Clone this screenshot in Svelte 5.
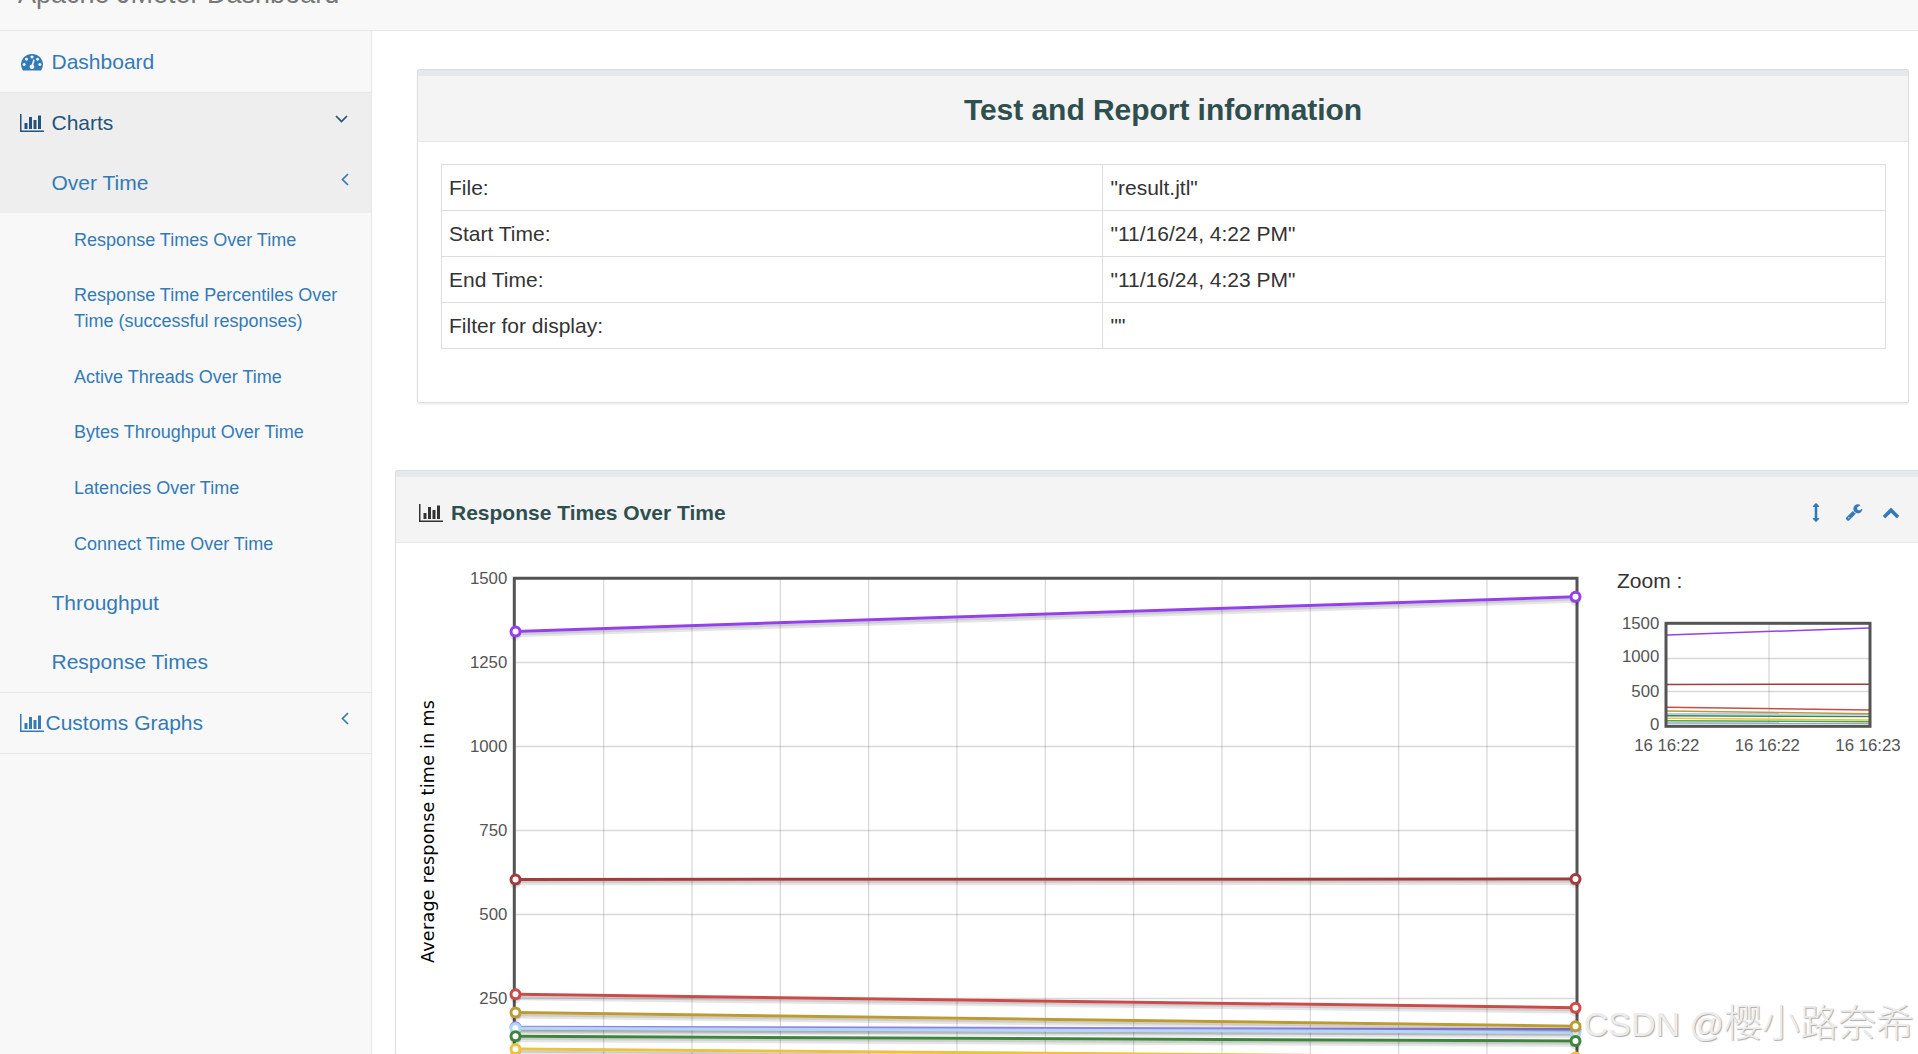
<script lang="ts">
	// Report dashboard: side navigation, test summary and the
	// "Response Times Over Time" panel with its overview plot.

	interface Series {
		color: string;
		from: number;
		to: number;
	}

	const overTime = [
		'Response Times Over Time',
		'Response Time Percentiles Over Time (successful responses)',
		'Active Threads Over Time',
		'Bytes Throughput Over Time',
		'Latencies Over Time',
		'Connect Time Over Time'
	];

	const info = [
		['File:', '"result.jtl"'],
		['Start Time:', '"11/16/24, 4:22 PM"'],
		['End Time:', '"11/16/24, 4:23 PM"'],
		['Filter for display:', '""']
	];

	const series: Series[] = [
		{ color: '#9440ed', from: 1344, to: 1447 },
		{ color: '#a23c3c', from: 606, to: 607 },
		{ color: '#cb4b4b', from: 264, to: 224 },
		{ color: '#9480e0', from: 166, to: 159 },
		{ color: '#afd8f8', from: 163, to: 151 },
		{ color: '#bd9b33', from: 210, to: 169 },
		{ color: '#3d853d', from: 139, to: 125 },
		{ color: '#edc240', from: 101, to: 76 },
		{ color: '#4da74d', from: 65, to: 50 },
		{ color: '#8cacc6', from: 28, to: 26 }
	];

	// main plot, coordinates local to the svg
	const X0 = 119.5;
	const X1 = 1179.5;
	const TOP = 35.5;
	const UNIT = 84 / 250;
	const yOf = (v: number) => TOP + (1500 - v) * UNIT;
	const ticks = [1500, 1250, 1000, 750, 500, 250];
	const columns = Array.from({ length: 11 }, (_, i) => X0 - 0.2 + ((X1 - X0) / 12) * (i + 1));

	// overview plot
	const MX0 = 67;
	const MX1 = 269;
	const miniY = (v: number) => 81.5 + (1500 - v) * (100.5 / 1500);
</script>

{#snippet chartIcon()}
	<svg class="chart-icon" viewBox="0 128 2048 1536" aria-hidden="true">
		<path d="M640 896v512h-256v-512h256zm384-512v1024h-256v-1024h256zm1024 1152v128h-2048v-1536h128v1408h1920zm-640-896v768h-256v-768h256zm384-384v1152h-256v-1152h256z" />
	</svg>
{/snippet}

{#snippet angleLeft()}
	<svg class="angle" width="8" height="13" viewBox="0 0 8 13" aria-hidden="true">
		<path d="M7 1 1.5 6.5 7 12" />
	</svg>
{/snippet}

<div class="page">
	<header class="navbar"><span class="brand">Apache JMeter Dashboard</span></header>

	<div class="main">
		<nav class="sidebar">
			<a href="#dashboard" class="item first">
				<span class="fw">
					<svg width="22" height="21" viewBox="0 0 1792 1792" preserveAspectRatio="none" aria-hidden="true">
						<path d="M384 1152q0-53-37.5-90.5t-90.5-37.5-90.5 37.5-37.5 90.5 37.5 90.5 90.5 37.5 90.5-37.5 37.5-90.5zm192-448q0-53-37.5-90.5t-90.5-37.5-90.5 37.5-37.5 90.5 37.5 90.5 90.5 37.5 90.5-37.5 37.5-90.5zm428 481l101-382q6-26-7.5-48.5t-38.5-29.5-48 6.5-30 39.5l-101 382q-60 5-107 43.5t-63 98.5q-20 77 20 146t117 89 146-20 89-117q16-60-6-117t-72-91zm660-33q0-53-37.5-90.5t-90.5-37.5-90.5 37.5-37.5 90.5 37.5 90.5 90.5 37.5 90.5-37.5 37.5-90.5zm-640-640q0-53-37.5-90.5t-90.5-37.5-90.5 37.5-37.5 90.5 37.5 90.5 90.5 37.5 90.5-37.5 37.5-90.5zm448 192q0-53-37.5-90.5t-90.5-37.5-90.5 37.5-37.5 90.5 37.5 90.5 90.5 37.5 90.5-37.5 37.5-90.5zm320 448q0 261-141 483-19 29-54 29h-1402q-35 0-54-29-141-221-141-483 0-182 71-348t191-286 286-191 348-71 348 71 286 191 191 286 71 348z" />
					</svg>
				</span>
				<span class="label gap">Dashboard</span>
			</a>
			<a href="#charts" class="item active">
				<span class="fw">{@render chartIcon()}</span>
				<span class="label gap">Charts</span>
				<svg class="angle down" width="13" height="8" viewBox="0 0 13 8" aria-hidden="true">
					<path d="M1 1 6.5 6.5 12 1" />
				</svg>
			</a>
			<a href="#over-time" class="item second open">
				<span class="label">Over Time</span>
				{@render angleLeft()}
			</a>
			<div class="third">
				{#each overTime as name}
					<a href="#chart">{name}</a>
				{/each}
			</div>
			<a href="#throughput" class="item second"><span class="label">Throughput</span></a>
			<a href="#response-times" class="item second last"><span class="label">Response Times</span></a>
			<a href="#customs" class="item customs">
				<span class="fw">{@render chartIcon()}</span>
				<span class="label">Customs Graphs</span>
				{@render angleLeft()}
			</a>
		</nav>

		<main class="content">
			<section class="panel summary">
				<div class="heading"><h2>Test and Report information</h2></div>
				<table>
					<tbody>
						{#each info as [key, value]}
							<tr><td class="key">{key}</td><td>{value}</td></tr>
						{/each}
					</tbody>
				</table>
			</section>

			<section class="panel graph">
				<div class="heading">
					<span class="heading-icon">{@render chartIcon()}</span>
					<h3>Response Times Over Time</h3>
					<div class="tools">
						<svg width="18" height="19" viewBox="0 0 1792 1792" preserveAspectRatio="none" aria-hidden="true">
							<path d="M1216 320q0 26-19 45t-45 19h-128v1024h128q26 0 45 19t19 45-19 45l-256 256q-19 19-45 19t-45-19l-256-256q-19-19-19-45t19-45 45-19h128v-1024h-128q-26 0-45-19t-19-45 19-45l256-256q19-19 45-19t45 19l256 256q19 19 19 45z" />
						</svg>
						<svg width="18" height="18" viewBox="0 0 1792 1792" aria-hidden="true">
							<path d="M448 1472q0-26-19-45t-45-19-45 19-19 45 19 45 45 19 45-19 19-45zm644-420l-682 682q-37 37-90 37-52 0-91-37l-106-108q-38-36-38-90 0-53 38-91l681-681q39 98 114.5 173.5t173.5 114.5zm634-435q0 39-23 106-47 134-164.5 217.5t-258.5 83.5q-185 0-316.5-131.5t-131.5-316.5 131.5-316.5 316.5-131.5q58 0 121.5 16.5t107.5 46.5q16 11 16 28t-16 28l-293 169v224l193 107q5-3 79-48.5t135.5-81 70.5-35.5q15 0 23.5 10t8.5 25z" />
						</svg>
						<svg width="18" height="18" viewBox="0 0 1792 1792" aria-hidden="true">
							<path d="M1683 1331l-166 165q-19 19-45 19t-45-19l-531-531-531 531q-19 19-45 19t-45-19l-166-165q-19-19-19-45.5t19-45.5l742-741q19-19 45-19t45 19l742 741q19 19 19 45.5t-19 45.5z" />
						</svg>
					</div>
				</div>

				<div class="plots">
					<svg class="plot" width="1204" height="511" viewBox="0 0 1204 511">
						<g class="grid">
							{#each columns as x}
								<line x1={x} x2={x} y1={TOP} y2="511" />
							{/each}
							{#each ticks.slice(1) as t}
								<line x1={X0} x2={X1} y1={yOf(t)} y2={yOf(t)} />
							{/each}
						</g>
						<path class="frame" d="M118.3 520V35.2H1181V520" />
						{#each series as s}
							<g transform="translate(0 .5)">
								<line class="shade wide" x1={X0} x2={X1} y1={yOf(s.from) + 3.7} y2={yOf(s.to) + 3.7} />
								<line class="shade" x1={X0} x2={X1} y1={yOf(s.from) + 2.6} y2={yOf(s.to) + 2.6} />
								<line x1={X0} x2={X1} y1={yOf(s.from)} y2={yOf(s.to)} stroke={s.color} stroke-width="3" />
								{#each [[X0, s.from], [X1, s.to]] as [x, v]}
									<path class="shade" d="M{x - 4.5} {yOf(v) + 3.4}a4.5 4.5 0 0 0 9 0" />
									<path class="shade dark" d="M{x - 4.5} {yOf(v) + 1.1}a4.5 4.5 0 0 0 9 0" />
									<circle cx={x} cy={yOf(v)} r="4.5" fill="#fff" stroke={s.color} stroke-width="3" />
								{/each}
							</g>
						{/each}
						{#each ticks as t}
							<text class="tick" x="111.3" y={yOf(t) + 5.5} text-anchor="end">{t}</text>
						{/each}
						<text class="axis" transform="translate(38 420) rotate(-90)" textLength="263">Average response time in ms</text>
					</svg>

					<div class="overview">
						<p>Zoom :</p>
						<svg class="mini" width="318" height="160" viewBox="0 50 318 160">
							<g class="grid">
								<line x1="169" x2="169" y1="80" y2="180" />
								<line x1={MX0} x2={MX1} y1="115.5" y2="115.5" />
								<line x1={MX0} x2={MX1} y1="148.5" y2="148.5" />
							</g>
							{#each series as s}
								<line x1={MX0} x2={MX1} y1={miniY(s.from)} y2={miniY(s.to)} stroke={s.color} stroke-width="1.5" />
							{/each}
							<rect class="frame" x="66" y="80.3" width="204" height="103" />
							<g class="tick" text-anchor="end">
								<text x="59.3" y="86.3">1500</text>
								<text x="59.3" y="119.3">1000</text>
								<text x="59.3" y="154.3">500</text>
								<text x="59.3" y="187.3">0</text>
							</g>
							<g class="tick" text-anchor="middle">
								<text x="66.8" y="208">16 16:22</text>
								<text x="167.3" y="208">16 16:22</text>
								<text x="268" y="208">16 16:23</text>
							</g>
						</svg>
					</div>
				</div>
			</section>
		</main>
	</div>

	<div class="watermark"><span>CSDN @</span>樱小路奈希</div>
</div>

<style>
	:global(body) {
		margin: 0;
		background: #fff;
	}

	.page {
		position: relative;
		display: flex;
		flex-direction: column;
		height: 1054px;
		overflow: hidden;
		color: #333;
		font: 21px/30px 'Liberation Sans', Arial, sans-serif;
	}

	.navbar {
		display: flex;
		flex: none;
		align-items: flex-end;
		box-sizing: border-box;
		height: 31px;
		padding: 0 18px;
		background: #f8f8f8;
		border-bottom: 1px solid #e7e7e7;
	}

	.brand {
		padding-bottom: 21px;
		color: #777;
		font-size: 27px;
		line-height: 30px;
	}

	.main {
		display: flex;
		flex: 1;
		min-height: 0;
	}

	.sidebar {
		flex: none;
		width: 371px;
		background: #f8f8f8;
		border-right: 1px solid #e7e7e7;
	}

	a {
		color: #337ab7;
		text-decoration: none;
	}

	.item {
		display: flex;
		align-items: center;
		box-sizing: border-box;
		height: 60px;
		padding: 0 22px 0 18.5px;
	}

	.item.first {
		height: 62px;
		border-bottom: 1px solid #e7e7e7;
	}

	.item.active {
		color: #23527c;
		background: #eee;
	}

	.item.second {
		padding-left: 51.5px;
	}

	.item.open {
		background: #eee;
	}

	.item.last {
		border-bottom: 1px solid #e7e7e7;
	}

	.item.customs {
		height: 61px;
		border-bottom: 1px solid #e7e7e7;
	}

	.fw {
		display: flex;
		justify-content: center;
		width: 27px;
	}

	.label {
		flex: 1;
	}

	.label.gap {
		padding-left: 6px;
	}

	svg {
		flex: none;
		fill: currentColor;
	}

	.chart-icon {
		width: 24px;
		height: 18px;
	}

	.angle {
		margin-bottom: 8px;
		fill: none;
		stroke: currentColor;
		stroke-width: 1.7;
	}

	.angle.down {
		margin-right: 1px;
	}

	.third {
		margin: -0.4px 0 0.4px;
	}

	.third a {
		display: block;
		padding: 15px 30px 15px 74.1px;
		font-size: 18px;
		line-height: 25.7px;
	}

	.content {
		display: flex;
		flex: 1;
		flex-direction: column;
		min-width: 0;
	}

	.panel {
		flex: none;
		box-sizing: border-box;
		background: #fff;
		border: 1px solid #ddd;
		border-radius: 2px;
		box-shadow: 0 2px 2px rgba(0, 0, 0, 0.06);
	}

	.heading {
		display: flex;
		align-items: center;
		box-sizing: border-box;
		height: 72px;
		background: #f4f4f4;
		border-top: 6px solid #e5e9ec;
		border-bottom: 1px solid #e7e7e7;
	}

	h2,
	h3 {
		margin: 0;
		color: #2f4f4f;
		font-weight: bold;
	}

	h2 {
		flex: 1;
		padding-top: 2px;
		font-size: 30px;
		letter-spacing: -0.05px;
		text-align: center;
	}

	h3 {
		flex: 1;
		font-size: 21px;
	}

	.summary {
		width: 1492px;
		height: 334px;
		margin: 38px 0 0 45px;
	}

	table {
		width: 1445px;
		margin: 22px 0 0 23px;
		border-collapse: collapse;
		table-layout: fixed;
	}

	td {
		box-sizing: border-box;
		height: 46px;
		padding: 0 7.5px;
		border: 1px solid #ddd;
	}

	.key {
		width: 661px;
		padding-left: 7px;
	}

	.graph {
		width: 1540px;
		margin: 67px 0 0 23px;
	}

	.graph .heading {
		padding-top: 6px;
	}

	.heading-icon {
		display: flex;
		width: 32px;
		padding-left: 23px;
	}

	.tools {
		display: flex;
		gap: 19.5px;
		padding-right: 34px;
		color: #337ab7;
	}

	.plots {
		display: flex;
	}

	.plot,
	.mini {
		display: block;
	}

	.grid line {
		stroke: rgba(84, 84, 84, 0.22);
		stroke-width: 1.3;
	}

	.frame {
		fill: none;
		stroke: #545454;
		stroke-width: 3;
	}

	.shade {
		fill: none;
		stroke: rgba(0, 0, 0, 0.1);
		stroke-width: 2.25;
	}

	.shade.wide {
		stroke-width: 4.5;
	}

	.shade.dark {
		stroke: rgba(0, 0, 0, 0.2);
	}

	.tick {
		fill: #545454;
		font-size: 16.8px;
	}

	.axis {
		fill: #000;
		font: 17.5px 'DejaVu Sans', Verdana, sans-serif;
	}

	.overview p {
		margin: 23px 0 0 17px;
	}

	.mini {
		margin-top: -3px;
	}

	.watermark {
		position: absolute;
		right: 4px;
		bottom: 6px;
		color: #ececec;
		font: 300 38px/48px 'Noto Sans CJK SC', sans-serif;
		text-shadow: 1px 1px 1px #aaa;
		white-space: nowrap;
	}

	.watermark span {
		font-family: 'Liberation Sans', Arial, sans-serif;
		font-size: 34px;
	}
</style>
